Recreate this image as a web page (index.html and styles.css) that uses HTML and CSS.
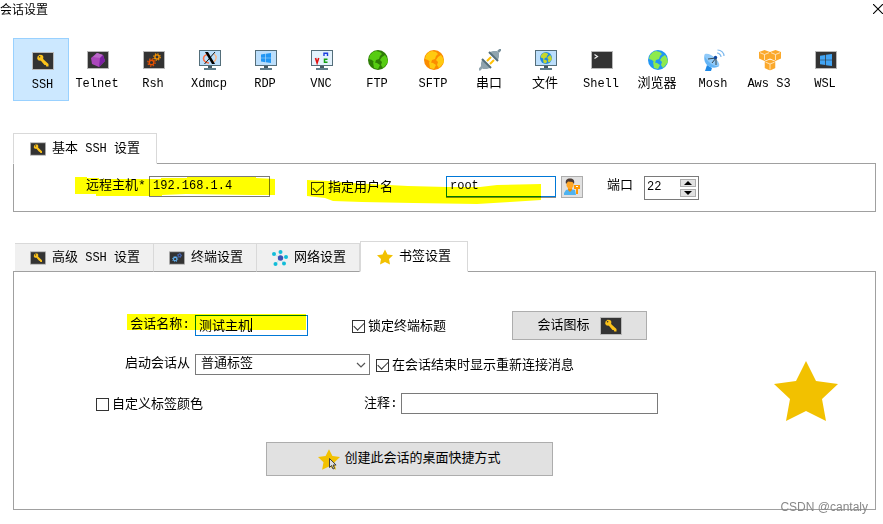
FILE: index.html
```html
<!DOCTYPE html>
<html lang="zh-CN">
<head>
  <meta charset="UTF-8" />
  <meta name="viewport" content="width=device-width, initial-scale=1" />
  <title>会话设置</title>
  <link rel="stylesheet" href="styles.css">
</head>
<body>

  <!-- Icon sprite -->
  <svg class="sprite" aria-hidden="true">
    <symbol id="frame" viewBox="0 0 22 22">
      <rect x="0.5" y="2.5" width="21" height="17" fill="#333" stroke="#b9b9b9" />
    </symbol>
    <symbol id="monitor" viewBox="0 0 22 22">
      <path d="M9 17h4v3h-4z" fill="#455a64" />
      <path d="M5 19h12v2H5z" fill="#607d8b" />
      <rect x="0.5" y="1.5" width="21" height="15" fill="#bbdefb" stroke="#546e7a" />
    </symbol>
    <symbol id="globe-land" viewBox="0 0 20 20">
      <path d="M8 1l4 1 2 2-2 2-1 3-3 1-1 3-3-3-3-1 1-4 3-3zM14 7l3-2 2 3 1 4-3 4-2 2-2-3 1-3-2-2zM5 12l4 1 3 2-2 4-4-1z" />
    </symbol>
    <symbol id="gear" viewBox="0 0 10 10">
      <circle cx="5" cy="5" r="2.6" fill="none" stroke="currentColor" stroke-width="1.6" />
      <circle cx="5" cy="5" r="4.1" fill="none" stroke="currentColor" stroke-width="1.4" stroke-dasharray="1.6 1.62" />
    </symbol>
    <symbol id="windows" viewBox="0 0 10 10">
      <path d="M0 1.5l4.4-.7v3.9H0zM5 .7L10 0v4.7H5zM0 5.3h4.4v3.9L0 8.5zM5 5.3h5V10l-5-.7z" />
    </symbol>
    <symbol id="star" viewBox="0 0 64 60">
      <path d="M32 0l10 20 22 3-16 15 4 22-20-10-20 10 4-22L0 23l22-3z" fill="#f2c100" />
    </symbol>
    <symbol id="key" viewBox="0 0 22 22">
      <use href="#frame" />
      <path d="M5.5 6.5l2-1.8 2.7.2 1.2 1.8-.3 2.2 5.4 5.2v2.4h-2.2l-.6-1.4-1.2-.2-3.6-4.2-2.3-.2-1.4-1.6z" fill="#fbc21a" />
      <circle cx="7.6" cy="6.8" r="0.8" fill="#333" />
    </symbol>
    <symbol id="telnet" viewBox="0 0 22 22">
      <use href="#frame" />
      <path d="M10 4l6 2 2 6-6 6-7-3-1-6z" fill="#ab47bc" />
      <path d="M10 4l6 2-3 3-7-1z" fill="#ba68c8" />
      <path d="M16 6l2 6-6 6 1-9z" fill="#7b1fa2" />
    </symbol>
    <symbol id="rsh" viewBox="0 0 22 22">
      <use href="#frame" />
      <use href="#gear" x="4" y="9" width="9" height="9" color="#e65100" />
      <use href="#gear" x="10" y="4" width="8" height="8" color="#ff9800" />
    </symbol>
    <symbol id="gears" viewBox="0 0 22 22">
      <use href="#frame" />
      <use href="#gear" x="4" y="8" width="9" height="9" color="#64b5f6" />
      <use href="#gear" x="11" y="4" width="7" height="7" color="#4f7be8" />
    </symbol>
    <symbol id="xdmcp" viewBox="0 0 22 22">
      <use href="#monitor" />
      <path d="M10 5.5c-4 0-5.5 2-5.5 4s2 4.500 5.5 4.500" fill="none" stroke="#ff7043" stroke-width="1.6" />
      <path d="M15 5c3 2 3 6-1 8.5" fill="none" stroke="#ffb380" stroke-width="1.4" />
      <path d="M6 3h3l7 12h-3z" fill="#000" />
      <path d="M16 3L5.5 15" stroke="#000" stroke-width="0.9" />
    </symbol>
    <symbol id="rdp" viewBox="0 0 22 22">
      <use href="#monitor" />
      <use href="#windows" x="6" y="4" width="10" height="10" fill="#2196f3" />
    </symbol>
    <symbol id="vnc" viewBox="0 0 22 22">
      <use href="#monitor" />
      <rect x="1" y="2" width="20" height="14" fill="#e3f2fd" />
      <path d="M4.5 9l1.6 5 1.6-5" fill="none" stroke="#e01010" stroke-width="1.6" />
      <path d="M13 7V4.200h3.5V7" fill="none" stroke="#1a3fe0" stroke-width="1.4" />
      <path d="M16.5 10.200h-3v3h3" fill="none" stroke="#12a012" stroke-width="1.5" />
    </symbol>
    <symbol id="ftp" viewBox="0 0 22 22">
      <circle cx="11" cy="11" r="10" fill="#2e7d06" />
      <use href="#globe-land" x="1" y="1" width="20" height="20" fill="#57cc12" />
    </symbol>
    <symbol id="sftp" viewBox="0 0 22 22">
      <circle cx="11" cy="11" r="10" fill="#fb8c00" />
      <use href="#globe-land" x="1" y="1" width="20" height="20" fill="#ffca10" />
    </symbol>
    <symbol id="serial" viewBox="0 0 22 22">
      <path d="M0 21l3-3" stroke="#90a4ae" stroke-width="2.5" />
      <path d="M22 0l-3 3" stroke="#78909c" stroke-width="2.5" />
      <path d="M3 11l8 8-3 1H4l-2-2v-4z" fill="#90a4ae" />
      <path d="M11 3l3-1h4l2 2v4l-1 3z" fill="#90a4ae" />
      <path d="M3 10l9 9M10 3l9 9" stroke="#546e7a" stroke-width="2" />
      <path d="M8 12l4-4M11 15l4-4" stroke="#ffc107" stroke-width="2" />
    </symbol>
    <symbol id="file" viewBox="0 0 22 22">
      <use href="#monitor" />
      <circle cx="11" cy="9" r="6" fill="#1e88e5" />
      <use href="#globe-land" x="5" y="3" width="12" height="12" fill="#c6d62c" />
    </symbol>
    <symbol id="shell" viewBox="0 0 22 22">
      <use href="#frame" />
      <path d="M3.5 5.5l3 2-3 2" fill="none" stroke="#eee" stroke-width="1.2" />
    </symbol>
    <symbol id="browser" viewBox="0 0 22 22">
      <circle cx="11" cy="11" r="10" fill="#2196f3" />
      <use href="#globe-land" x="1" y="1" width="20" height="20" fill="#8eea4e" />
    </symbol>
    <symbol id="mosh" viewBox="0 0 22 22">
      <path d="M4 16l5 3-1 3H2z" fill="#1e88e5" />
      <path d="M2 5c-2 5 0 11 5 13 3 1 7 1 9-1z" fill="#64b5f6" />
      <path d="M2 5c3-1 7 1 10 4s5 6 4 8c-3 1-7-1-10-4S1 7 2 5z" fill="#90caf9" />
      <path d="M5 10l8-1v7M13 9l-4 5" fill="none" stroke="#37474f" stroke-width="1" />
      <circle cx="12.5" cy="8.5" r="1.7" fill="#0d47a1" />
      <path d="M14 4c2 0 4 2 4 4M14.5 1c4 0 6.5 3 6.5 6" fill="none" stroke="#7db9ee" stroke-width="1.2" />
    </symbol>
    <symbol id="cube" viewBox="0 0 11 11">
      <path d="M5.5 0L11 2v6.5L5.5 11 0 8.5V2z" fill="#fba92c" />
      <path d="M1 2.7l4.5 1.8L10 2.7M5.5 4.500V10" fill="none" stroke="#ffe9c4" stroke-width="0.9" />
    </symbol>
    <symbol id="aws" viewBox="0 0 22 22">
      <use href="#cube" x="0" y="1" width="11" height="11" />
      <use href="#cube" x="11" y="1" width="11" height="11" />
      <use href="#cube" x="5.5" y="10.5" width="11" height="11" />
    </symbol>
    <symbol id="wsl" viewBox="0 0 22 22">
      <use href="#frame" />
      <use href="#windows" x="5" y="5" width="12" height="12" fill="#42a5f5" />
    </symbol>
    <symbol id="network" viewBox="0 0 16 16">
      <path d="M8 8L2 4M8 8V2M8 8l6-1M8 8l4 6M8 8l-4 6" stroke="#b6dfee" stroke-width="0.8" />
      <circle cx="8.5" cy="8" r="2.7" fill="#3f51b5" />
      <g fill="#12bcd8">
        <circle cx="2" cy="4" r="2" /><circle cx="8.5" cy="2" r="2" /><circle cx="14" cy="7" r="2" />
        <circle cx="12" cy="13.5" r="2" /><circle cx="3.5" cy="14" r="2" />
      </g>
    </symbol>
    <symbol id="user" viewBox="0 0 18 18">
      <path d="M1 17v-2l2-3 4-1 5 1 1 5z" fill="#4fb3f0" />
      <path d="M5 9h4v3l-2 2-2-2z" fill="#f08c00" />
      <path d="M3.5 3.5L5 2h4l1.5 2V8l-2 3h-3l-2-3z" fill="#ffa726" />
      <path d="M3 6c-1-4 1-5.5 4-5.5S12 2 11 6L9.500 4 5 3.500z" fill="#4a3a34" />
      <path d="M11 7h6v4h-2v5h-2v-5h-2z" fill="#ff9800" />
      <path d="M13 8.5h2" stroke="#fff" />
    </symbol>
  </svg>

  <!-- Title bar -->
  <header class="titlebar">
    <h1>会话设置</h1>
    <button class="close" aria-label="关闭">
      <svg viewBox="0 0 10 10"><path d="M0 0l10 10M10 0L0 10" stroke="#000" stroke-width="1.1" /></svg>
    </button>
  </header>

  <!-- Session types -->
  <nav class="toolbar">
    <button class="tool active"><svg><use href="#key" /></svg><span class="mono">SSH</span></button>
    <button class="tool"><svg><use href="#telnet" /></svg><span class="mono">Telnet</span></button>
    <button class="tool"><svg><use href="#rsh" /></svg><span class="mono">Rsh</span></button>
    <button class="tool"><svg><use href="#xdmcp" /></svg><span class="mono">Xdmcp</span></button>
    <button class="tool"><svg><use href="#rdp" /></svg><span class="mono">RDP</span></button>
    <button class="tool"><svg><use href="#vnc" /></svg><span class="mono">VNC</span></button>
    <button class="tool"><svg><use href="#ftp" /></svg><span class="mono">FTP</span></button>
    <button class="tool"><svg><use href="#sftp" /></svg><span class="mono">SFTP</span></button>
    <button class="tool"><svg><use href="#serial" /></svg><span>串口</span></button>
    <button class="tool"><svg><use href="#file" /></svg><span>文件</span></button>
    <button class="tool"><svg><use href="#shell" /></svg><span class="mono">Shell</span></button>
    <button class="tool"><svg><use href="#browser" /></svg><span>浏览器</span></button>
    <button class="tool"><svg><use href="#mosh" /></svg><span class="mono">Mosh</span></button>
    <button class="tool"><svg><use href="#aws" /></svg><span class="mono">Aws S3</span></button>
    <button class="tool"><svg><use href="#wsl" /></svg><span class="mono">WSL</span></button>
  </nav>

  <!-- Basic settings -->
  <section class="basic">
    <div class="tabs">
      <button class="tab active"><svg><use href="#key" /></svg><span>基本<span class="mono"> SSH </span>设置</span></button>
    </div>
    <div class="panel basic-panel">
      <div class="field host">
        <label for="host">远程主机*</label>
        <input class="text mono" id="host" type="text" value="192.168.1.4">
      </div>
      <div class="field user">
        <label class="check"><input type="checkbox" checked>指定用户名</label>
        <input class="text mono focus" type="text" value="root" aria-label="用户名">
        <button class="btn user-btn" aria-label="用户"><svg><use href="#user" /></svg></button>
      </div>
      <div class="field port">
        <label for="port">端口</label>
        <div class="spin">
          <input class="mono" id="port" type="number" value="22">
          <div class="arrows">
            <button aria-label="增加"><svg viewBox="0 0 8 4"><path d="M0 4l4-4 4 4z" /></svg></button>
            <button aria-label="减少"><svg viewBox="0 0 8 4"><path d="M0 0l4 4 4-4z" /></svg></button>
          </div>
        </div>
      </div>
      <!-- Marker strokes -->
      <svg class="marker marker-basic" aria-hidden="true">
        <path d="M0 1h12v1h12v1h62v-1h26v-1h69v1l19 1v16h-24l-65-1-24 1v1H21v-2L0 18z" />
        <path d="M232 4l21 1 22 2 58 3 39 1 33 0 17-2 44-1v16l-31 2-33 2-64-1-51-1-29-1-8-3-18-2z" />
      </svg>
    </div>
  </section>

  <!-- Advanced settings -->
  <section class="advanced">
    <div class="tabs">
      <button class="tab first"><svg><use href="#key" /></svg><span>高级<span class="mono"> SSH </span>设置</span></button>
      <button class="tab"><svg><use href="#gears" /></svg><span>终端设置</span></button>
      <button class="tab"><svg><use href="#network" /></svg><span>网络设置</span></button>
      <button class="tab active"><svg><use href="#star" /></svg><span>书签设置</span></button>
    </div>
    <div class="panel bookmark-panel">
      <div class="form">
        <div class="row">
          <label class="caption" for="name">会话名称:</label>
          <div class="name-box">
            <input class="text focus" id="name" type="text" value="测试主机">
            <i class="caret"></i>
          </div>
          <label class="check lock"><input type="checkbox" checked>锁定终端标题</label>
          <button class="btn icon-btn">会话图标<svg><use href="#key" /></svg></button>
        </div>
        <div class="row">
          <label class="caption" for="start">启动会话从</label>
          <div class="select">
            <select id="start"><option>普通标签</option></select>
            <svg viewBox="0 0 10 6"><path d="M1 1l4 4 4-4" fill="none" stroke="#555" stroke-width="1.2" /></svg>
          </div>
          <label class="check"><input type="checkbox" checked>在会话结束时显示重新连接消息</label>
        </div>
        <div class="row">
          <label class="check color"><input type="checkbox">自定义标签颜色</label>
          <label for="note">注释:</label>
          <input class="text note" id="note" type="text">
        </div>
        <button class="btn shortcut">
          <span class="shortcut-icon">
            <svg class="shortcut-star"><use href="#star" /></svg>
            <svg class="pointer" viewBox="0 0 8 12"><path d="M.5.5v9l2-2L4 11l1.500-.7L4.100 7h3z" fill="#ddd" stroke="#333" stroke-width="0.9" /></svg>
          </span>
          创建此会话的桌面快捷方式
        </button>
      </div>
      <svg class="big-star"><use href="#star" /></svg>
      <div class="marker marker-name"></div>
      <span class="watermark">CSDN @cantaly</span>
    </div>
  </section>

</body>
</html>
```
FILE: styles.css
```css
* {
  margin: 0; padding: 0; box-sizing: border-box;
}
body {
  min-height: 100vh;
  padding-bottom: 14px;
  font-family: "Liberation Mono", "Noto Sans CJK SC", monospace;
  font-size: 13px;
  line-height: 16px;
  background: #fff;
  color: #000;
}
button, input, select {
  font: inherit;
  color: inherit;
  border-radius: 0;
}
svg {
  display: block;
  flex: none;
}
.sprite {
  position: absolute;
  width: 0;
  height: 0;
}
.mono {
  font-size: 12px;
  white-space: pre;
}

/* Title bar */
.titlebar {
  display: flex;
  justify-content: space-between;
  height: 18px;
}
.titlebar h1 {
  font: 12px/18px "Noto Sans CJK SC", sans-serif;
}
.close {
  border: none;
  background: none;
}
.close svg {
  width: 10px;
  height: 10px;
}

/* Session types */
.toolbar {
  display: flex;
  padding: 20px 13px 32px;
}
.tool {
  display: flex;
  flex-direction: column;
  align-items: center;
  gap: 5px;
  width: 56px;
  height: 63px;
  padding-top: 10px;
  border: 1px solid transparent;
  background: none;
  white-space: nowrap;
}
.tool svg {
  width: 22px;
  height: 22px;
  margin-left: 2px;
}
.tool.active {
  padding: 11px 0 0 3px;
  background: #cce8ff;
  border-color: #99d1ff;
}
.tool.active svg {
  margin-left: 0;
}

/* Tabs and panels */
.basic, .advanced {
  padding: 0 7px 0 13px;
}
.advanced {
  margin-top: 29px;
}
.tabs {
  display: flex;
  align-items: flex-end;
  position: relative;
  z-index: 1;
  margin-bottom: -1px;
}
.tab {
  display: flex;
  align-items: center;
  gap: 6px;
  height: 29px;
  padding: 0 13px 0 15px;
  border: 1px solid #d9d9d9;
  border-left: none;
  border-bottom-color: #a0a0a0;
  background: #f0f0f0;
}
.tab svg {
  width: 16px;
  height: 16px;
}
.tab.first {
  margin-left: 2px;
}
.tab.active {
  height: 31px;
  padding: 0 16px;
  border-left: 1px solid #d9d9d9;
  border-bottom-color: #fff;
  background: #fff;
}
.panel {
  position: relative;
  display: flex;
  border: 1px solid #a0a0a0;
}

/* Controls */
.text {
  height: 21px;
  padding: 0 3px 2px;
  border: 1px solid #7a7a7a;
  background: #fff;
  outline: none;
}
.text.focus {
  border-color: #0078d7;
}
.check {
  display: flex;
  align-items: center;
  gap: 3px;
  white-space: nowrap;
}
.check input {
  appearance: none;
  display: grid;
  place-items: center;
  width: 13px;
  height: 13px;
  border: 1px solid #333;
  background: #fff;
}
.check input:checked::after {
  content: "";
  width: 9px;
  height: 5px;
  margin-top: -3px;
  border: solid #333;
  border-width: 0 0 1px 1px;
  transform: rotate(-45deg);
}
.btn {
  display: flex;
  align-items: center;
  justify-content: center;
  border: 1px solid #adadad;
  background: #e1e1e1;
}

/* Basic panel */
.basic-panel {
  padding: 12px 0 11px 72px;
}
.field {
  display: flex;
  align-items: flex-start;
  height: 24px;
}
.field label {
  padding-top: 2px;
}
.host {
  justify-content: space-between;
  width: 184px;
}
.host .text {
  width: 121px;
}
.user {
  margin-left: 41px;
}
.user .check {
  gap: 4px;
  width: 135px;
  height: 22px;
}
.user .text {
  width: 110px;
  box-shadow: 0 1px 0 #8a8a8a;
}
.user-btn {
  width: 22px;
  height: 22px;
  margin-left: 5px;
}
.user-btn svg {
  width: 18px;
  height: 18px;
}
.port {
  gap: 11px;
  margin-left: 24px;
}
.spin {
  display: flex;
  width: 55px;
  height: 24px;
  padding: 2px;
  border: 1px solid #7a7a7a;
}
.spin input {
  flex: 1;
  min-width: 0;
  height: 16px;
  border: none;
  outline: none;
  appearance: textfield;
}
.spin input::-webkit-inner-spin-button {
  appearance: none;
}
.arrows {
  display: flex;
  flex-direction: column;
  gap: 2px;
}
.arrows button {
  display: grid;
  place-items: center;
  width: 16px;
  height: 8px;
  border: 1px solid #adadad;
  background: #e1e1e1;
}
.arrows svg {
  width: 8px;
  height: 4px;
}

/* Bookmark panel */
.bookmark-panel {
  align-items: center;
  padding: 39px 37px 33px 0;
}
.form {
  flex: 1;
  display: flex;
  flex-direction: column;
  gap: 10px;
}
.row {
  display: flex;
  align-items: center;
  height: 29px;
}
.row .check {
  padding-top: 2px;
}
.caption {
  width: 181px;
  padding: 0 5px 2px 0;
  text-align: right;
}
.name-box {
  position: relative;
  margin-right: 44px;
}
.name-box .text {
  display: block;
  width: 113px;
}
.caret {
  position: absolute;
  left: 56px;
  top: 3px;
  width: 1px;
  height: 14px;
  background: #000;
}
.lock {
  width: 160px;
}
.icon-btn {
  gap: 10px;
  width: 135px;
  height: 29px;
}
.icon-btn svg {
  width: 22px;
  height: 22px;
}
.select {
  position: relative;
  margin-right: 6px;
}
.select select {
  appearance: none;
  display: block;
  width: 175px;
  height: 21px;
  padding: 0 5px 2px;
  border: 1px solid #7a7a7a;
  background: #fff;
}
.select svg {
  position: absolute;
  right: 4px;
  top: 8px;
  width: 10px;
  height: 6px;
  pointer-events: none;
}
.row .color {
  width: 350px;
  padding-left: 82px;
}
.note {
  width: 257px;
  margin-left: 3px;
}
.shortcut {
  gap: 4px;
  width: 287px;
  height: 34px;
  margin: 14px 0 0 252px;
}
.shortcut-icon {
  position: relative;
}
.shortcut-star {
  width: 22px;
  height: 21px;
}
.pointer {
  position: absolute;
  left: 11px;
  top: 9px;
  width: 8px;
  height: 12px;
}
.big-star {
  width: 64px;
  height: 60px;
  margin-bottom: 6px;
}

/* Overlays */
.marker {
  position: absolute;
  fill: #ff0;
  mix-blend-mode: multiply;
  pointer-events: none;
}
.marker-basic {
  left: 61px;
  top: 12px;
  width: 470px;
  height: 30px;
}
.marker-name {
  left: 113px;
  top: 42px;
  width: 179px;
  height: 16px;
  background: #ff0;
}
.watermark {
  position: absolute;
  right: 7px;
  bottom: -6px;
  font: 12px/16px "Liberation Sans", sans-serif;
  color: #888;
}
```
